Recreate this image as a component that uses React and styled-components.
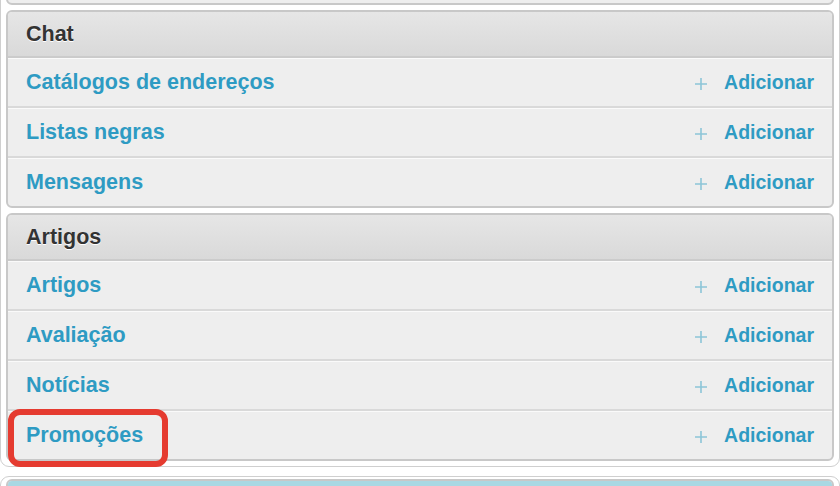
import React from "react";
import styled, { createGlobalStyle } from "styled-components";

const GlobalStyle = createGlobalStyle`
  html, body {
    margin: 0;
    padding: 0;
    background: #ffffff;
    font-family: "Liberation Sans", Arial, Helvetica, sans-serif;
    overflow: hidden;
  }
`;

// dados dos módulos
const modules = [
  {
    title: "Chat",
    items: ["Catálogos de endereços", "Listas negras", "Mensagens"],
  },
  {
    title: "Artigos",
    items: ["Artigos", "Avaliação", "Notícias", "Promoções"],
    highlight: "Promoções",
  },
];

const PlusIcon = () => (
  <svg width="14" height="14" viewBox="0 0 14 14">
    <path d="M7 1v12M1 7h12" stroke="#8cc5d7" strokeWidth="1.6" fill="none" />
  </svg>
);

const App = () => {
  return (
    <Page>
      <GlobalStyle />
      <Panel $top>
        <Module>
          <Stub />
        </Module>
        {modules.map((mod) => (
          <Module key={mod.title}>
            <Caption>{mod.title}</Caption>
            {mod.items.map((item) => (
              <Row key={item}>
                <ModelLink href="#">{item}</ModelLink>
                <AddLink href="#">
                  <PlusIcon />
                  <span>Adicionar</span>
                </AddLink>
                {mod.highlight === item && <Highlight />}
              </Row>
            ))}
          </Module>
        ))}
      </Panel>
      <Panel $tight>
        <Module>
          <Caption $blue />
        </Module>
      </Panel>
    </Page>
  );
};

const Page = styled.div`
  display: flex;
  flex-direction: column;
  gap: 9px;
  width: 840px;
`;

const Panel = styled.div`
  display: flex;
  flex-direction: column;
  gap: 5px;
  margin-top: ${(p) => (p.$top ? "-21px" : "0")};
  padding: ${(p) => (p.$tight ? "2px 5px 5px" : "5px")};
  border: 1px solid #cfcfcf;
  border-radius: 9px;
  background: #ffffff;
`;

const Module = styled.div`
  border: 2px solid #c8c8c8;
  border-radius: 6px;
  background: #eeeeee;
`;

const Stub = styled.div`
  height: 16px;
`;

const Caption = styled.div`
  height: 44px;
  display: flex;
  align-items: center;
  padding: 0 18px;
  border-radius: 4px 4px 0 0;
  border-bottom: 2px solid #cbcbcb;
  background: ${(p) =>
    p.$blue
      ? "#a9d8e3"
      : "linear-gradient(to bottom, #e6e6e6 0%, #d9d9d9 100%)"};
  color: #333333;
  font-size: 21.5px;
  font-weight: bold;
  text-shadow: 0 1px 0 #ffffff;
`;

const Row = styled.div`
  position: relative;
  height: 47px;
  display: flex;
  align-items: center;
  justify-content: space-between;
  padding: 0 18px;
  border-top: 1px solid #fafafa;
  border-bottom: 2px solid #d9d9d9;

  &:last-child {
    border-bottom: none;
  }
`;

const ModelLink = styled.a`
  color: #2e9bc3;
  font-size: 21.5px;
  font-weight: bold;
  text-decoration: none;
`;

const AddLink = styled.a`
  display: flex;
  align-items: center;
  gap: 16px;
  color: #2e9bc3;
  font-size: 19.5px;
  font-weight: bold;
  text-decoration: none;

  svg {
    margin-top: 2px;
  }
`;

const Highlight = styled.div`
  position: absolute;
  left: 0;
  top: -3px;
  width: 160px;
  height: 58px;
  box-sizing: border-box;
  border: 6px solid #e53b30;
  border-radius: 12px;
  pointer-events: none;
`;

export default App;
